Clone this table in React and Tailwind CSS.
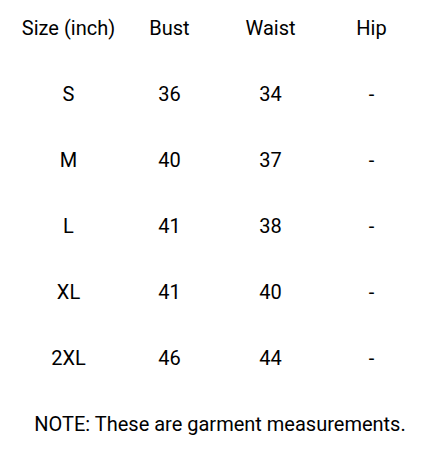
const rows = [
  ['S', '36', '34', '-'],
  ['M', '40', '37', '-'],
  ['L', '41', '38', '-'],
  ['XL', '41', '40', '-'],
  ['2XL', '46', '44', '-'],
];

export default function App() {
  return (
    <div className="w-[436px] h-[467px] bg-white text-black pl-[18px] font-['Roboto',sans-serif] text-[20px]">
      <div className="w-[404px]">
        <div className="grid grid-cols-4 h-[56px] items-center text-center">
          <div>Size (inch)</div>
          <div>Bust</div>
          <div>Waist</div>
          <div>Hip</div>
        </div>
        <div className="pt-[5px]">
          {rows.map(r => (
            <div key={r[0]} className="grid grid-cols-4 h-[66px] items-center text-center">
              {r.map((c, i) => <div key={i}>{c}</div>)}
            </div>
          ))}
        </div>
        <div className="h-[66px] flex items-center justify-center">
          NOTE: These are garment measurements.
        </div>
      </div>
    </div>
  );
}
